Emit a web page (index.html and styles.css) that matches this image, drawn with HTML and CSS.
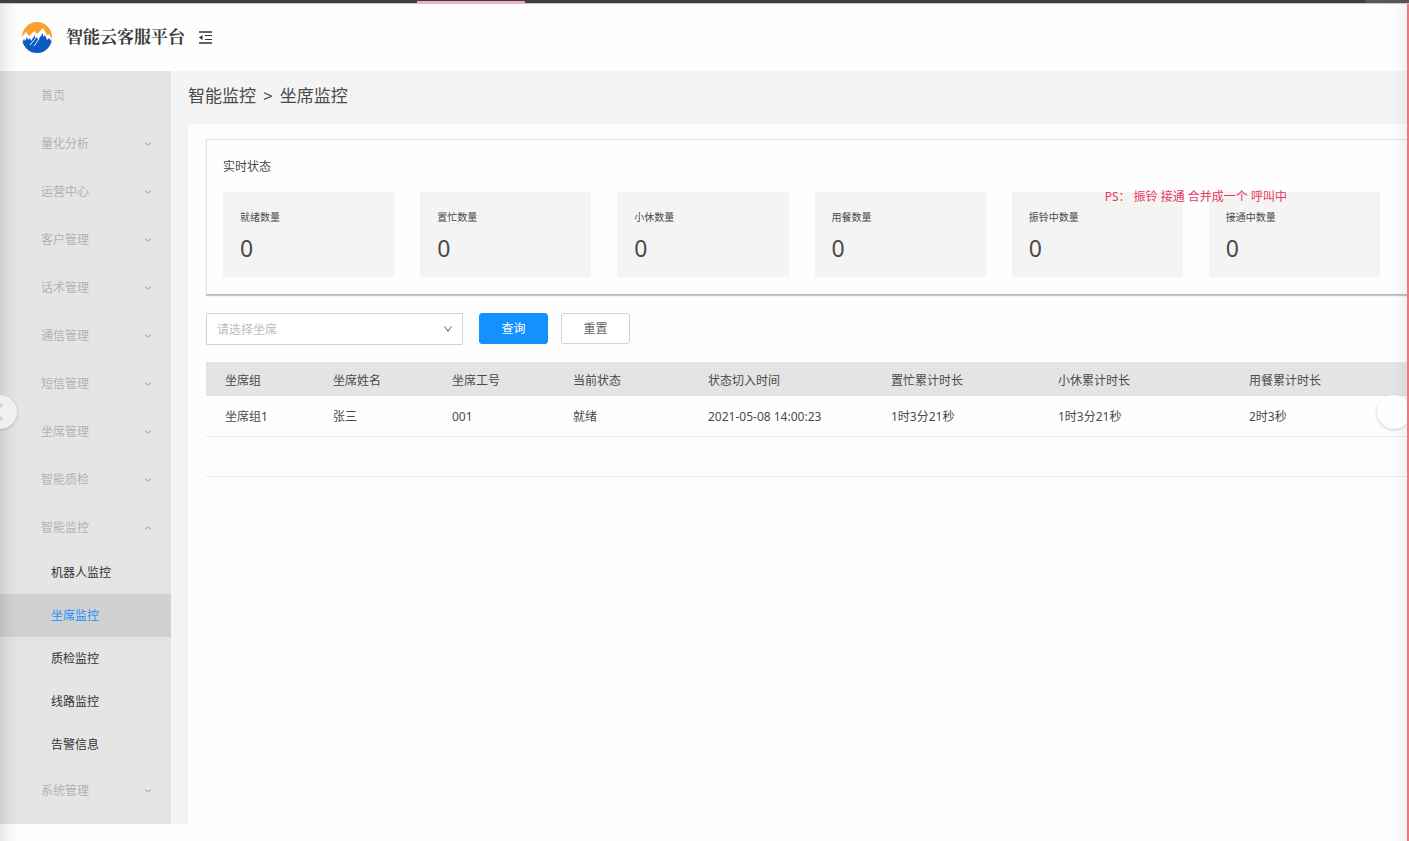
FILE: index.html
```html
<!DOCTYPE html>
<html lang="zh-CN">
<head>
<meta charset="utf-8">
<meta name="viewport" content="width=device-width, initial-scale=1">
<title>智能云客服平台</title>
<link rel="stylesheet" href="styles.css">
</head>
<body>
<svg class="sprite" aria-hidden="true">
  <symbol id="chevron" viewBox="0 0 8 8"><path d="M1 2.5 4 5 7 2.5" fill="none" stroke="currentColor" stroke-width="1.2"/></symbol>
  <symbol id="caret" viewBox="0 0 10 10"><path d="M1.5 2.5 5 7 8.5 2.5" fill="none" stroke="currentColor" stroke-width="1.1"/></symbol>
</svg>
<div class="viewer">
  <div class="strip"><span class="strip-tab"></span><span class="strip-end"></span></div>
  <header class="header">
    <svg class="logo" viewBox="0 0 30 31" aria-hidden="true">
      <defs><clipPath id="disc"><ellipse cx="15" cy="15.5" rx="15" ry="15.5"/></clipPath></defs>
      <g clip-path="url(#disc)">
        <path fill="#f9a12e" d="M0 0h30v31H0z"/>
        <path fill="#fff" d="M0 15 4 10 7 14 12 9 15 12 21 6 25 13 27 12 30 17V31H0z"/>
        <path fill="#0a5bc4" d="M0 21 2 17 3 19 5 15 6 18 8 16 9 19 13 13 13 17 15 15 16 18 21 11 21 15 23 13 25 18 27 16 30 20V31H0z"/>
        <path stroke="#fff" stroke-width=".9" fill="none" d="M13 17 8 23M17 17 12 24"/>
      </g>
    </svg>
    <h1 class="brand">智能云客服平台</h1>
    <button class="fold" type="button" aria-label="收起菜单">
      <svg viewBox="0 0 13 13"><path d="M0 1h13M0 12h13" stroke="#333" stroke-width="1.6"/><path d="M6 4.5h7M6 8.5h7" stroke="#333" stroke-width="1.2"/><path d="M0 6.5 3.5 4v5z" fill="#333"/></svg>
    </button>
  </header>
  <div class="layout">
    <nav class="sidebar">
      <a class="item" href="#">首页</a>
      <a class="item" href="#">量化分析<svg><use href="#chevron"/></svg></a>
      <a class="item" href="#">运营中心<svg><use href="#chevron"/></svg></a>
      <a class="item" href="#">客户管理<svg><use href="#chevron"/></svg></a>
      <a class="item" href="#">话术管理<svg><use href="#chevron"/></svg></a>
      <a class="item" href="#">通信管理<svg><use href="#chevron"/></svg></a>
      <a class="item" href="#">短信管理<svg><use href="#chevron"/></svg></a>
      <a class="item" href="#">坐席管理<svg><use href="#chevron"/></svg></a>
      <a class="item" href="#">智能质检<svg><use href="#chevron"/></svg></a>
      <a class="item open" href="#">智能监控<svg><use href="#chevron"/></svg></a>
      <a class="sub" href="#">机器人监控</a>
      <a class="sub active" href="#">坐席监控</a>
      <a class="sub" href="#">质检监控</a>
      <a class="sub" href="#">线路监控</a>
      <a class="sub" href="#">告警信息</a>
      <a class="item" href="#">系统管理<svg><use href="#chevron"/></svg></a>
    </nav>
    <main class="main">
      <div class="crumbs"><span>智能监控</span><span>&gt;</span><span>坐席监控</span></div>
      <div class="content">
        <section class="panel">
          <h2 class="panel-title">实时状态</h2>
          <div class="cards">
            <div class="card"><span class="label">就绪数量</span><span class="value">0</span></div>
            <div class="card"><span class="label">置忙数量</span><span class="value">0</span></div>
            <div class="card"><span class="label">小休数量</span><span class="value">0</span></div>
            <div class="card"><span class="label">用餐数量</span><span class="value">0</span></div>
            <div class="card"><span class="label">振铃中数量</span><span class="value">0</span></div>
            <div class="card"><span class="label">接通中数量</span><span class="value">0</span></div>
          </div>
          <p class="note">PS： 振铃 接通 合并成一个 呼叫中</p>
        </section>
        <form class="filters">
          <div class="picker">
            <select class="select" aria-label="坐席"><option>请选择坐席</option></select>
            <svg class="arrow"><use href="#caret"/></svg>
          </div>
          <button class="btn primary" type="button">查询</button>
          <button class="btn" type="button">重置</button>
        </form>
        <table class="table">
          <colgroup><col class="c1"><col class="c2"><col class="c3"><col class="c4"><col class="c5"><col class="c6"><col class="c7"><col></colgroup>
          <thead><tr><th>坐席组</th><th>坐席姓名</th><th>坐席工号</th><th>当前状态</th><th>状态切入时间</th><th>置忙累计时长</th><th>小休累计时长</th><th>用餐累计时长</th></tr></thead>
          <tbody>
            <tr><td>坐席组1</td><td>张三</td><td>001</td><td>就绪</td><td>2021-05-08 14:00:23</td><td>1时3分21秒</td><td>1时3分21秒</td><td>2时3秒</td></tr>
            <tr><td colspan="8"></td></tr>
          </tbody>
        </table>
      </div>
    </main>
  </div>
  <div class="shade left"></div>
  <div class="shade right"></div>
  <button class="turn prev" type="button" aria-label="上一张"><svg viewBox="0 0 10 18"><path d="M9 1 2 9l7 8" fill="none" stroke="#d0d0d0" stroke-width="2.5"/></svg></button>
  <button class="turn next" type="button" aria-label="下一张"></button>
  <div class="edge"></div>
</div>
</body>
</html>
```
FILE: styles.css
```css
* { box-sizing: border-box; }
body {
  margin: 0;
  background: #fefefe;
  color: #4a4a4a;
  font: 12px/18px "Noto Sans", "Noto Sans CJK SC", sans-serif;
}
h1, h2, p { margin: 0; font-weight: normal; }
a { color: inherit; text-decoration: none; }
button, select { font: inherit; }
.sprite { position: absolute; width: 0; height: 0; }
.viewer { position: relative; min-height: 100vh; overflow: hidden; }

.strip {
  display: flex;
  height: 4px;
  background: #3d3c47;
  border-bottom: 1px solid #c8c8ca;
}
.strip-tab { width: 108px; height: 2px; margin: 1px 0 0 417px; background: #ffa9ae; }
.strip-end { width: 44px; margin-left: auto; background: #55565c; }

.header { display: flex; align-items: center; height: 67px; padding-left: 22px; }
.logo { width: 30px; height: 31px; }
.brand {
  margin: 0 14px 0 14px;
  color: #3c3c3c;
  font: bold 17px/24px "Liberation Serif", "Noto Serif CJK SC", "Noto Sans CJK SC", serif;
}
.fold { width: 13px; height: 13px; padding: 0; border: 0; background: none; }
.fold svg { display: block; width: 13px; height: 13px; }

.layout { display: grid; grid-template-columns: 171px 1fr; }
.sidebar { padding-bottom: 10px; background: #e5e5e5; color: #b2b2b2; }
.item, .sub { display: flex; align-items: center; }
.item { justify-content: space-between; height: 48px; padding: 2px 19px 0 41px; }
.item svg { width: 8px; height: 8px; }
.open svg { transform: rotate(180deg); }
.sub { height: 43px; padding-left: 51px; color: #333; }
.active { background: #d1d1d1; color: #1890ff; }

.main { display: flex; flex-direction: column; min-width: 0; padding-left: 17px; background: #f4f4f4; }
.crumbs { display: flex; gap: 7px; padding: 13px 0 16px; font-size: 17px; line-height: 24px; }
.content { flex: 1; padding: 15px 0 0 18px; background: #fefefe; }
.panel {
  position: relative;
  padding: 18px 29px 17px 16px;
  border: 1px solid #e2e2e2;
  border-right: 0;
  border-bottom-color: #bbb;
  box-shadow: 0 1px 1px #c8c8c8;
}
.panel-title { margin-bottom: 16px; font-size: 12px; }
.cards { display: grid; grid-template-columns: repeat(6, 1fr); gap: 26px; }
.card { display: flex; flex-direction: column; gap: 7px; height: 85px; padding: 17px; background: #f4f4f4; }
.label { font-size: 10px; line-height: 16px; }
.value { font-size: 23px; line-height: 32px; }
.note { position: absolute; top: 48px; right: 122px; color: #e8375f; }

.filters { display: flex; align-items: flex-start; padding: 18px 0 17px; }
.picker { position: relative; width: 257px; margin-right: 16px; }
.select {
  display: block;
  width: 100%;
  height: 32px;
  padding: 2px 10px 0;
  border: 1px solid #d2d2d2;
  border-radius: 1px;
  appearance: none;
  background: #fff;
  color: #bcbcbc;
}
.arrow { position: absolute; top: 11px; right: 10px; width: 10px; height: 10px; color: #777; pointer-events: none; }
.btn {
  width: 69px;
  height: 31px;
  margin-right: 13px;
  padding: 0;
  border: 1px solid #d2d2d2;
  border-radius: 3px;
  background: #fff;
  color: #666;
}
.primary { border-color: #1490ff; background: #1490ff; color: #fff; }

.table { width: 100%; border-collapse: collapse; table-layout: fixed; }
.c1 { width: 127px; }
.c2 { width: 119px; }
.c3 { width: 121px; }
.c4 { width: 135px; }
.c5 { width: 183px; }
.c6 { width: 167px; }
.c7 { width: 191px; }
.table th, .table td { padding: 3px 0 0; font-weight: normal; text-align: left; white-space: nowrap; }
.table th:first-child, .table td:first-child { padding-left: 19px; }
.table th { height: 34px; background: #e4e4e4; }
.table td { height: 40px; border-bottom: 1px solid #ebebeb; }

.shade { position: absolute; top: 4px; bottom: 0; width: 20px; pointer-events: none; }
.left { left: 0; background: linear-gradient(to right, rgba(0, 0, 0, .09), rgba(0, 0, 0, .02) 60%, transparent); }
.right { right: 0; background: linear-gradient(to left, rgba(0, 0, 0, .06), rgba(0, 0, 0, .01) 60%, transparent); }
.edge { position: absolute; top: 4px; right: 0; bottom: 0; width: 2px; background: #e97b7d; }
.turn {
  position: absolute;
  top: 395px;
  width: 34px;
  height: 34px;
  padding: 0;
  border: 0;
  border-radius: 50%;
  background: #fefefe;
  box-shadow: 0 1px 3px rgba(0, 0, 0, .2);
}
.prev { left: -17px; background: #f0f0f0; }
.prev svg { display: block; width: 10px; height: 18px; margin-left: 10px; }
.next { right: -2px; }
```
